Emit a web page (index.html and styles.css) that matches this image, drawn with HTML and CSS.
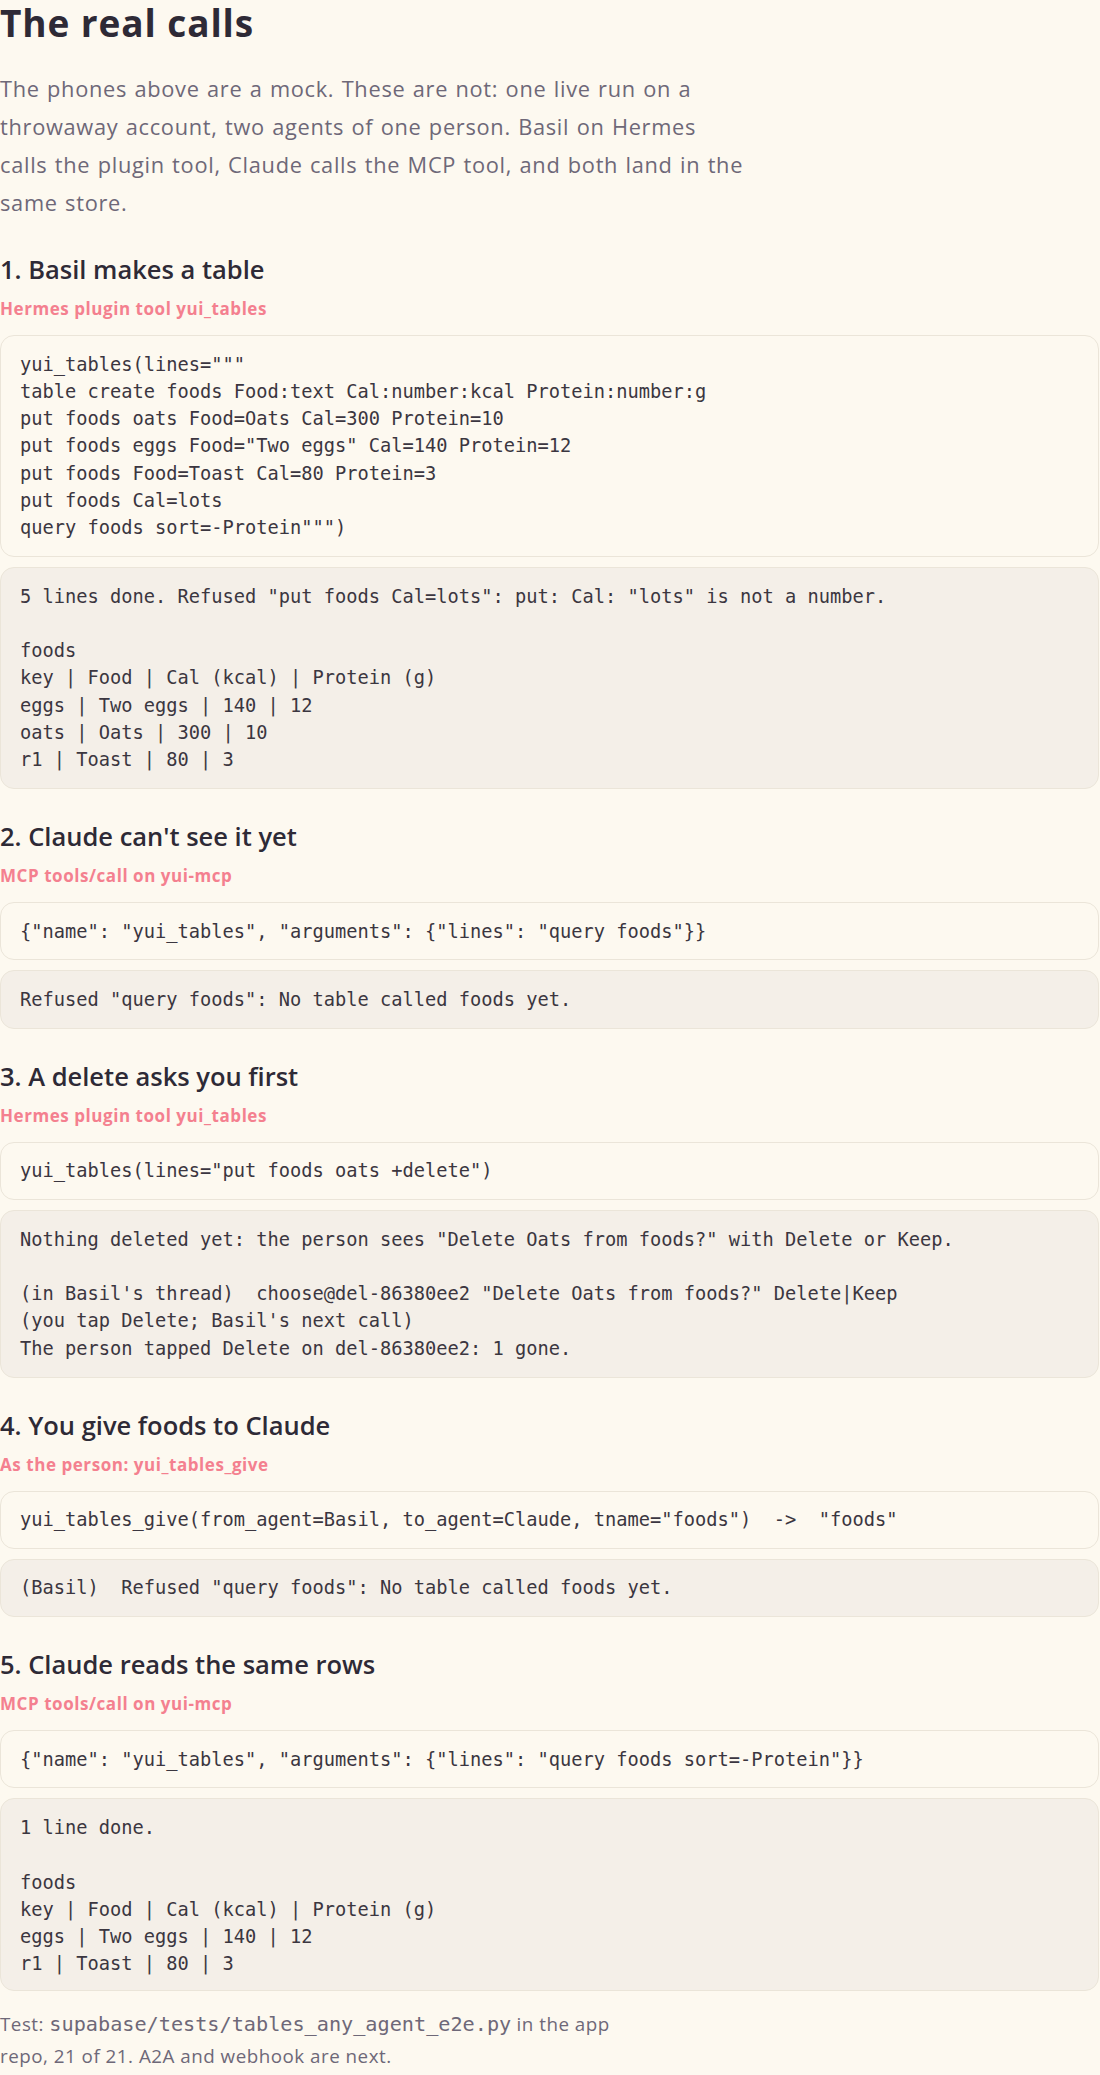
FILE: index.html
```html
<!DOCTYPE html>
<html lang="en">
<head>
<meta charset="utf-8">
<title>The real calls</title>
<link rel="stylesheet" href="styles.css">
</head>
<body>
<main class="calls">
  <h2 class="title">The real calls</h2>
  <p class="lede">The phones above are a mock. These are not: one live run on a<br>throwaway account, two agents of one person. Basil on Hermes<br>calls the plugin tool, Claude calls the MCP tool, and both land in the<br>same store.</p>

  <section class="step">
    <h3 class="step-title">1. Basil makes a table</h3>
    <div class="via">Hermes plugin tool yui_tables</div>
    <pre class="code call">yui_tables(lines="""
table create foods Food:text Cal:number:kcal Protein:number:g
put foods oats Food=Oats Cal=300 Protein=10
put foods eggs Food="Two eggs" Cal=140 Protein=12
put foods Food=Toast Cal=80 Protein=3
put foods Cal=lots
query foods sort=-Protein""")</pre>
    <pre class="code out">5 lines done. Refused "put foods Cal=lots": put: Cal: "lots" is not a number.

foods
key | Food | Cal (kcal) | Protein (g)
eggs | Two eggs | 140 | 12
oats | Oats | 300 | 10
r1 | Toast | 80 | 3</pre>
  </section>

  <section class="step">
    <h3 class="step-title">2. Claude can't see it yet</h3>
    <div class="via">MCP tools/call on yui-mcp</div>
    <pre class="code call">{"name": "yui_tables", "arguments": {"lines": "query foods"}}</pre>
    <pre class="code out">Refused "query foods": No table called foods yet.</pre>
  </section>

  <section class="step">
    <h3 class="step-title">3. A delete asks you first</h3>
    <div class="via">Hermes plugin tool yui_tables</div>
    <pre class="code call">yui_tables(lines="put foods oats +delete")</pre>
    <pre class="code out">Nothing deleted yet: the person sees "Delete Oats from foods?" with Delete or Keep.

(in Basil's thread)  choose@del-86380ee2 "Delete Oats from foods?" Delete|Keep
(you tap Delete; Basil's next call)
The person tapped Delete on del-86380ee2: 1 gone.</pre>
  </section>

  <section class="step">
    <h3 class="step-title">4. You give foods to Claude</h3>
    <div class="via">As the person: yui_tables_give</div>
    <pre class="code call">yui_tables_give(from_agent=Basil, to_agent=Claude, tname="foods")  -&gt;  "foods"</pre>
    <pre class="code out">(Basil)  Refused "query foods": No table called foods yet.</pre>
  </section>

  <section class="step">
    <h3 class="step-title">5. Claude reads the same rows</h3>
    <div class="via">MCP tools/call on yui-mcp</div>
    <pre class="code call">{"name": "yui_tables", "arguments": {"lines": "query foods sort=-Protein"}}</pre>
    <pre class="code out">1 line done.

foods
key | Food | Cal (kcal) | Protein (g)
eggs | Two eggs | 140 | 12
r1 | Toast | 80 | 3</pre>
  </section>

  <p class="foot"><span class="foot-lead">Test: <code class="path">supabase/tests/tables_any_agent_e2e.py</code> in the app</span> <span class="foot-rest">repo, 21 of 21. A2A and webhook are next.</span></p>
</main>
</body>
</html>
```

FILE: styles.css
```css
html, body {
  margin: 0;
  padding: 0;
  background: #fdf9f0;
}

body {
  font-family: "Open Sans", "Noto Sans", "DejaVu Sans", sans-serif;
  color: #2e2a36;
}

.calls {
  display: flex;
  flex-direction: column;
  padding: 0 1px 0 0;
}

.title {
  margin: 0;
  font-size: 37px;
  line-height: 44px;
  font-weight: 700;
  letter-spacing: 0.9px;
  color: #2e2a36;
  padding-top: 1px;
}

.lede {
  margin: 25px 0 0;
  max-width: 820px;
  font-size: 21.8px;
  line-height: 38px;
  letter-spacing: 0.7px;
  word-spacing: 1px;
  color: #6e6878;
}

.step {
  display: flex;
  flex-direction: column;
  margin-top: 30px;
}

.step-title {
  margin: 0;
  font-size: 25.5px;
  line-height: 34px;
  font-weight: 600;
  color: #2e2a36;
}

.via {
  margin-top: 11px;
  font-size: 17px;
  line-height: 24px;
  font-weight: 700;
  letter-spacing: 0.55px;
  color: #f4808f;
}

.code {
  margin: 0;
  font-family: "DejaVu Sans Mono", "Liberation Mono", monospace;
  font-size: 18.7px;
  line-height: 27.3px;
  color: #3b3640;
  border: 1px solid #ebe5d9;
  border-radius: 14px;
  padding: 14.5px 19px;
  white-space: pre;
}

.call {
  margin-top: 14px;
  background: #fdf9f0;
}

.out {
  margin-top: 10px;
  background: #f4efe8;
}

.step:last-of-type .out {
  padding-bottom: 12px;
}

.foot {
  margin: 17px 0 0;
  max-width: 640px;
  font-size: 18.8px;
  line-height: 32.3px;
  letter-spacing: 0.5px;
  color: #6e6878;
}

.foot-lead,
.foot-rest {
  display: block;
}

.path {
  font-family: "DejaVu Sans Mono", "Liberation Mono", monospace;
  font-size: 20.2px;
  line-height: 1;
  letter-spacing: 0;
}
```
